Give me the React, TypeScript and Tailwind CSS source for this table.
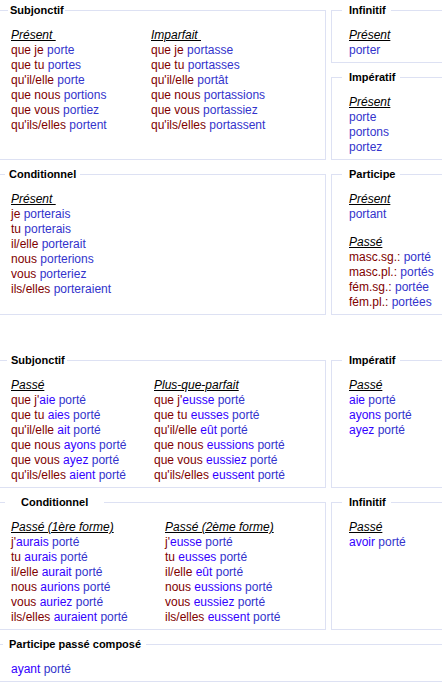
import type { ReactNode } from 'react';

// segment kinds: p = pronoun, v = verb form, a = auxiliary
type Seg = [string, 'p' | 'v' | 'a'];

const segColor = {
  p: 'text-[#800000]',
  v: 'text-[#3333cc]',
  a: 'text-[#3300ff]',
};

const simple = (pron: string, verb: string): Seg[] => (pron ? [[pron + ' ', 'p'], [verb, 'v']] : [[verb, 'v']]);
const compound = (pron: string, aux: string, sep = ' '): Seg[] => [
  ...(pron ? ([[pron + sep, 'p']] as Seg[]) : []),
  [aux, 'a'],
  [' porté', 'v'],
];

function Line({ segs }: { segs: Seg[] }) {
  return (
    <div className="leading-[15px] whitespace-pre">
      {segs.map(([t, k], i) => (
        <span key={i} className={segColor[k]}>
          {t}
        </span>
      ))}
    </div>
  );
}

function Tense({ title, rows, className = '' }: { title: string; rows: Seg[][]; className?: string }) {
  return (
    <div className={className}>
      <div className="leading-[15px] italic underline text-black whitespace-pre">{title}</div>
      {rows.map((r, i) => (
        <Line key={i} segs={r} />
      ))}
    </div>
  );
}

function Box({
  legend,
  legendClass,
  className = '',
  children,
}: {
  legend: string;
  legendClass: string;
  className?: string;
  children: ReactNode;
}) {
  return (
    <fieldset className={`border border-[#dde1f3] pt-[10px] pb-[4px] min-w-0 ${className}`}>
      <legend className={`text-[11px] leading-[15px] font-bold text-black ${legendClass}`}>{legend}</legend>
      {children}
    </fieldset>
  );
}

const LEFT = 'w-[326px] shrink-0 border-l-0 pl-[11px]';
const RIGHT = 'flex-1 border-r-0 pl-[17px]';
const RLEG = '-ml-[7px] pl-[7px] pr-[5px]';

const subjPresent = [
  simple('que je', 'porte'),
  simple('que tu', 'portes'),
  simple("qu'il/elle", 'porte'),
  simple('que nous', 'portions'),
  simple('que vous', 'portiez'),
  simple("qu'ils/elles", 'portent'),
];
const subjImparfait = [
  simple('que je', 'portasse'),
  simple('que tu', 'portasses'),
  simple("qu'il/elle", 'portât'),
  simple('que nous', 'portassions'),
  simple('que vous', 'portassiez'),
  simple("qu'ils/elles", 'portassent'),
];
const condPresent = [
  simple('je', 'porterais'),
  simple('tu', 'porterais'),
  simple('il/elle', 'porterait'),
  simple('nous', 'porterions'),
  simple('vous', 'porteriez'),
  simple('ils/elles', 'porteraient'),
];
const subjPasse = [
  compound("que j'", 'aie', ''),
  compound('que tu', 'aies'),
  compound("qu'il/elle", 'ait'),
  compound('que nous', 'ayons'),
  compound('que vous', 'ayez'),
  compound("qu'ils/elles", 'aient'),
];
const subjPqp = [
  compound("que j'", 'eusse', ''),
  compound('que tu', 'eusses'),
  compound("qu'il/elle", 'eût'),
  compound('que nous', 'eussions'),
  compound('que vous', 'eussiez'),
  compound("qu'ils/elles", 'eussent'),
];
const condPasse1 = [
  compound("j'", 'aurais', ''),
  compound('tu', 'aurais'),
  compound('il/elle', 'aurait'),
  compound('nous', 'aurions'),
  compound('vous', 'auriez'),
  compound('ils/elles', 'auraient'),
];
const condPasse2 = [
  compound("j'", 'eusse', ''),
  compound('tu', 'eusses'),
  compound('il/elle', 'eût'),
  compound('nous', 'eussions'),
  compound('vous', 'eussiez'),
  compound('ils/elles', 'eussent'),
];

export default function App() {
  return (
    <div className="w-[442px] overflow-hidden bg-white pt-[3px] pb-[5px] text-[12px] font-['Liberation_Sans',Arial,sans-serif]">
      {/* simple tenses */}
      <div className="flex items-stretch">
        <Box legend="Subjonctif" legendClass="-ml-[3px] pl-[2px] pr-[1px]" className={LEFT}>
          <div className="grid grid-cols-[140px_auto]">
            <Tense title={'Présent\u00a0'} rows={subjPresent} />
            <Tense title={'Imparfait\u00a0'} rows={subjImparfait} />
          </div>
        </Box>
        <div className="flex-1 ml-[5px] flex flex-col gap-[7px]">
          <Box legend="Infinitif" legendClass={RLEG} className={RIGHT}>
            <Tense title="Présent" rows={[simple('', 'porter')]} />
          </Box>
          <Box legend="Impératif" legendClass={RLEG} className={RIGHT}>
            <Tense title="Présent" rows={[simple('', 'porte'), simple('', 'portons'), simple('', 'portez')]} />
          </Box>
        </div>
      </div>

      <div className="flex items-stretch mt-[7px]">
        <Box legend="Conditionnel" legendClass="-ml-[6px] px-[4px]" className={LEFT}>
          <Tense title={'Présent\u00a0'} rows={condPresent} />
        </Box>
        <Box legend="Participe" legendClass={RLEG} className={`ml-[5px] ${RIGHT}`}>
          <Tense title="Présent" rows={[simple('', 'portant')]} />
          <Tense
            title="Passé"
            className="mt-[13px]"
            rows={[
              simple('masc.sg.:', 'porté'),
              simple('masc.pl.:', 'portés'),
              simple('fém.sg.:', 'portée'),
              simple('fém.pl.:', 'portées'),
            ]}
          />
        </Box>
      </div>

      {/* compound tenses */}
      <div className="flex items-stretch mt-[38px]">
        <Box legend="Subjonctif" legendClass="-ml-[4px] pl-[4px] pr-[2px]" className={LEFT}>
          <div className="grid grid-cols-[143px_auto]">
            <Tense title="Passé" rows={subjPasse} />
            <Tense title="Plus-que-parfait" rows={subjPqp} />
          </div>
        </Box>
        <Box legend="Impératif" legendClass={RLEG} className={`ml-[5px] ${RIGHT}`}>
          <Tense title="Passé" rows={[compound('', 'aie'), compound('', 'ayons'), compound('', 'ayez')]} />
        </Box>
      </div>

      <div className="flex items-stretch mt-[7px]">
        <Box legend="Conditionnel" legendClass="-ml-[6px] px-[16px]" className={LEFT}>
          <div className="grid grid-cols-[154px_auto]">
            <Tense title="Passé (1ère forme)" rows={condPasse1} />
            <Tense title="Passé (2ème forme)" rows={condPasse2} />
          </div>
        </Box>
        <Box legend="Infinitif" legendClass={RLEG} className={`ml-[5px] ${RIGHT}`}>
          <Tense title="Passé" rows={[compound('', 'avoir')]} />
        </Box>
      </div>

      <Box legend="Participe passé composé" legendClass="-ml-[8px] pl-[6px] pr-[5px]" className="mt-[7px] border-x-0 pl-[11px]">
        <div className="pt-[0px]">
          <Line segs={compound('', 'ayant')} />
        </div>
      </Box>
    </div>
  );
}
